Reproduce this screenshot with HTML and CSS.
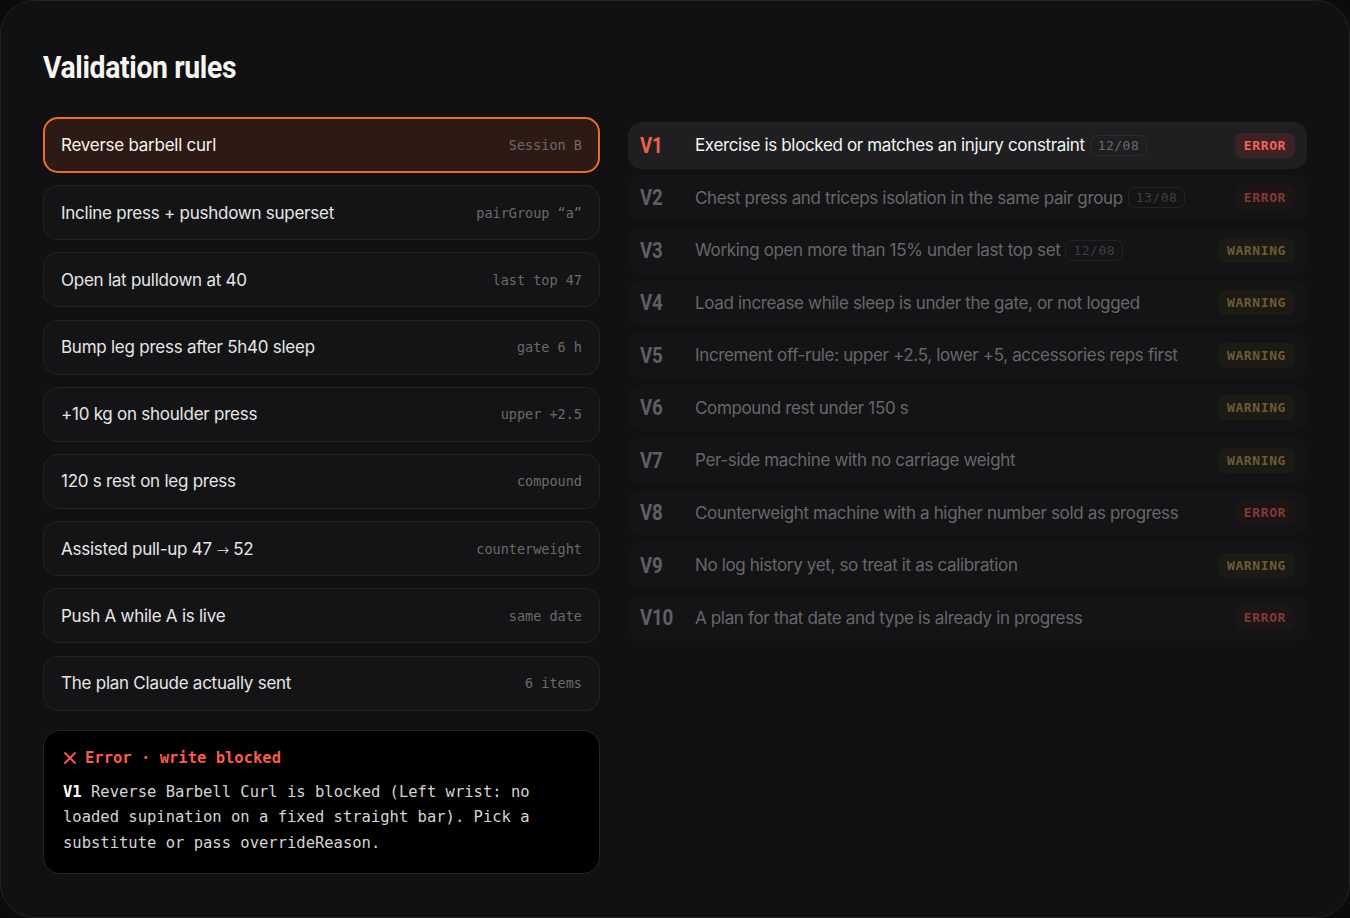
FILE: index.html
```html
<!DOCTYPE html>
<html lang="en">
<head>
<meta charset="utf-8">
<title>Validation rules</title>
<link rel="stylesheet" href="styles.css">
</head>
<body>
<div class="frame">
  <h1 class="title"><span class="title-text">Validation rules</span></h1>
  <div class="layout">
    <div class="cases">
      <div class="case active"><span class="case-name">Reverse barbell curl</span><span class="case-tag">Session B</span></div>
      <div class="case"><span class="case-name">Incline press + pushdown superset</span><span class="case-tag">pairGroup “a”</span></div>
      <div class="case"><span class="case-name">Open lat pulldown at 40</span><span class="case-tag">last top 47</span></div>
      <div class="case"><span class="case-name">Bump leg press after 5h40 sleep</span><span class="case-tag">gate 6 h</span></div>
      <div class="case"><span class="case-name">+10 kg on shoulder press</span><span class="case-tag">upper +2.5</span></div>
      <div class="case"><span class="case-name">120 s rest on leg press</span><span class="case-tag">compound</span></div>
      <div class="case"><span class="case-name">Assisted pull-up 47 <span class="arrow">→</span> 52</span><span class="case-tag">counterweight</span></div>
      <div class="case"><span class="case-name">Push A while A is live</span><span class="case-tag">same date</span></div>
      <div class="case"><span class="case-name">The plan Claude actually sent</span><span class="case-tag">6 items</span></div>
      <div class="console">
        <div class="console-head">
          <svg class="x-icon" viewBox="0 0 14 14" width="14" height="14"><path d="M2 2L12 12M12 2L2 12" stroke="currentColor" stroke-width="1.8" stroke-linecap="round" fill="none"/></svg>
          <span>Error · write blocked</span>
        </div>
        <p class="console-body"><span class="strong">V1</span> Reverse Barbell Curl is blocked (Left wrist: no loaded supination on a fixed straight bar). Pick a substitute or pass overrideReason.</p>
      </div>
    </div>
    <div class="rules">
      <div class="rule active"><span class="code"><span class="code-text">V1</span></span><span class="desc">Exercise is blocked or matches an injury constraint</span><span class="date">12/08</span><span class="badge error">ERROR</span></div>
      <div class="rule"><span class="code"><span class="code-text">V2</span></span><span class="desc">Chest press and triceps isolation in the same pair group</span><span class="date">13/08</span><span class="badge error">ERROR</span></div>
      <div class="rule"><span class="code"><span class="code-text">V3</span></span><span class="desc">Working open more than 15% under last top set</span><span class="date">12/08</span><span class="badge warning">WARNING</span></div>
      <div class="rule"><span class="code"><span class="code-text">V4</span></span><span class="desc">Load increase while sleep is under the gate, or not logged</span><span class="badge warning">WARNING</span></div>
      <div class="rule"><span class="code"><span class="code-text">V5</span></span><span class="desc">Increment off-rule: upper +2.5, lower +5, accessories reps first</span><span class="badge warning">WARNING</span></div>
      <div class="rule"><span class="code"><span class="code-text">V6</span></span><span class="desc">Compound rest under 150 s</span><span class="badge warning">WARNING</span></div>
      <div class="rule"><span class="code"><span class="code-text">V7</span></span><span class="desc">Per-side machine with no carriage weight</span><span class="badge warning">WARNING</span></div>
      <div class="rule"><span class="code"><span class="code-text">V8</span></span><span class="desc">Counterweight machine with a higher number sold as progress</span><span class="badge error">ERROR</span></div>
      <div class="rule"><span class="code"><span class="code-text">V9</span></span><span class="desc">No log history yet, so treat it as calibration</span><span class="badge warning">WARNING</span></div>
      <div class="rule"><span class="code"><span class="code-text">V10</span></span><span class="desc">A plan for that date and type is already in progress</span><span class="badge error">ERROR</span></div>
    </div>
  </div>
</div>
</body>
</html>
```

FILE: styles.css
```css
* { box-sizing: border-box; }
html, body { margin: 0; padding: 0; background: #0b0a0c; }
body {
  font-family: Inter, "Noto Sans", sans-serif;
  color: #e9e9e9;
}
.frame {
  width: 1350px;
  height: 918px;
  background: #111113;
  border: 1px solid #232326;
  border-radius: 34px;
  padding: 48px 42px 0 42px;
}
.title {
  margin: 0;
  font-family: Roboto, "Liberation Sans", sans-serif;
  font-weight: 700;
  font-size: 31px;
  letter-spacing: -0.4px;
  line-height: 38px;
  color: #f7f5f0;
}
.title-text {
  display: inline-block;
  transform: scaleX(0.915);
  transform-origin: left center;
}
.layout {
  display: grid;
  grid-template-columns: 557px 1fr;
  column-gap: 28px;
  margin-top: 30px;
}
.cases {
  display: flex;
  flex-direction: column;
  gap: 12.2px;
}
.case {
  height: 55px;
  display: flex;
  align-items: center;
  justify-content: space-between;
  padding: 0 17px 0 17px;
  border: 1px solid #232325;
  border-radius: 15px;
  background: #141416;
}
.case.active {
  height: 56px;
  background: #2d1a15;
  border: 2px solid #f26a2b;
  padding: 0 16px;
}
.case-name {
  font-size: 17px;
  letter-spacing: -0.25px;
  color: #e6e6e6;
}
.arrow {
  font-family: "DejaVu Sans", sans-serif;
  font-weight: 300;
  font-size: 15px;
}
.case.active .case-name { color: #f5f2ee; }
.case-tag {
  font-family: "DejaVu Sans Mono", "Liberation Mono", monospace;
  font-size: 13.5px;
  color: #6a6a6a;
}
.console {
  margin-top: 7px;
  background: #000;
  border: 1px solid #252527;
  border-radius: 17px;
  padding: 17px 19px 17px 19px;
  font-family: "DejaVu Sans Mono", "Liberation Mono", monospace;
  font-size: 15.5px;
}
.console-head {
  display: flex;
  align-items: center;
  gap: 8px;
  color: #fb5c48;
  font-weight: 700;
  line-height: 20px;
}
.x-icon { color: #fb5c48; }
.console-body {
  margin: 12px 0 0 0;
  color: #d4d4d4;
  line-height: 25.5px;
}
.console-body .strong { color: #ffffff; font-weight: 700; }
.rules {
  display: flex;
  flex-direction: column;
  gap: 6px;
  padding-top: 5px;
}
.rule {
  height: 46.5px;
  display: flex;
  align-items: center;
  padding: 0 12px 0 12px;
  border-radius: 14px;
  background: #141416;
}
.rule.active { background: #1f1f21; }
.code {
  width: 55px;
  flex: none;
  font-family: Roboto, "Liberation Sans", sans-serif;
  font-weight: 700;
  font-size: 22px;
  letter-spacing: -0.3px;
  color: #5f5f61;
}
.code-text {
  display: inline-block;
  transform: scaleX(0.85);
  transform-origin: left center;
}
.rule.active .code { color: #f4604a; }
.desc {
  font-size: 17px;
  letter-spacing: -0.35px;
  color: #676769;
}
.rule.active .desc { color: #f3f3f3; }
.date {
  margin-left: 5px;
  font-family: "DejaVu Sans Mono", "Liberation Mono", monospace;
  font-size: 13px;
  letter-spacing: 0.5px;
  color: #3f3f41;
  border: 1px solid #232325;
  border-radius: 7px;
  padding: 2px 7px;
}
.rule.active .date { color: #6a6a6c; border-color: #2c2c2e; }
.badge {
  margin-left: auto;
  font-family: "DejaVu Sans Mono", "Liberation Mono", monospace;
  font-weight: 700;
  font-size: 13px;
  letter-spacing: 0.6px;
  padding: 5px 9px;
  border-radius: 7px;
}
.badge.error { color: #823a34; background: #1b1515; }
.badge.warning { color: #6f5a30; background: #1c1a15; }
.rule.active .badge.error { color: #f7625a; background: #3b2324; }
```
